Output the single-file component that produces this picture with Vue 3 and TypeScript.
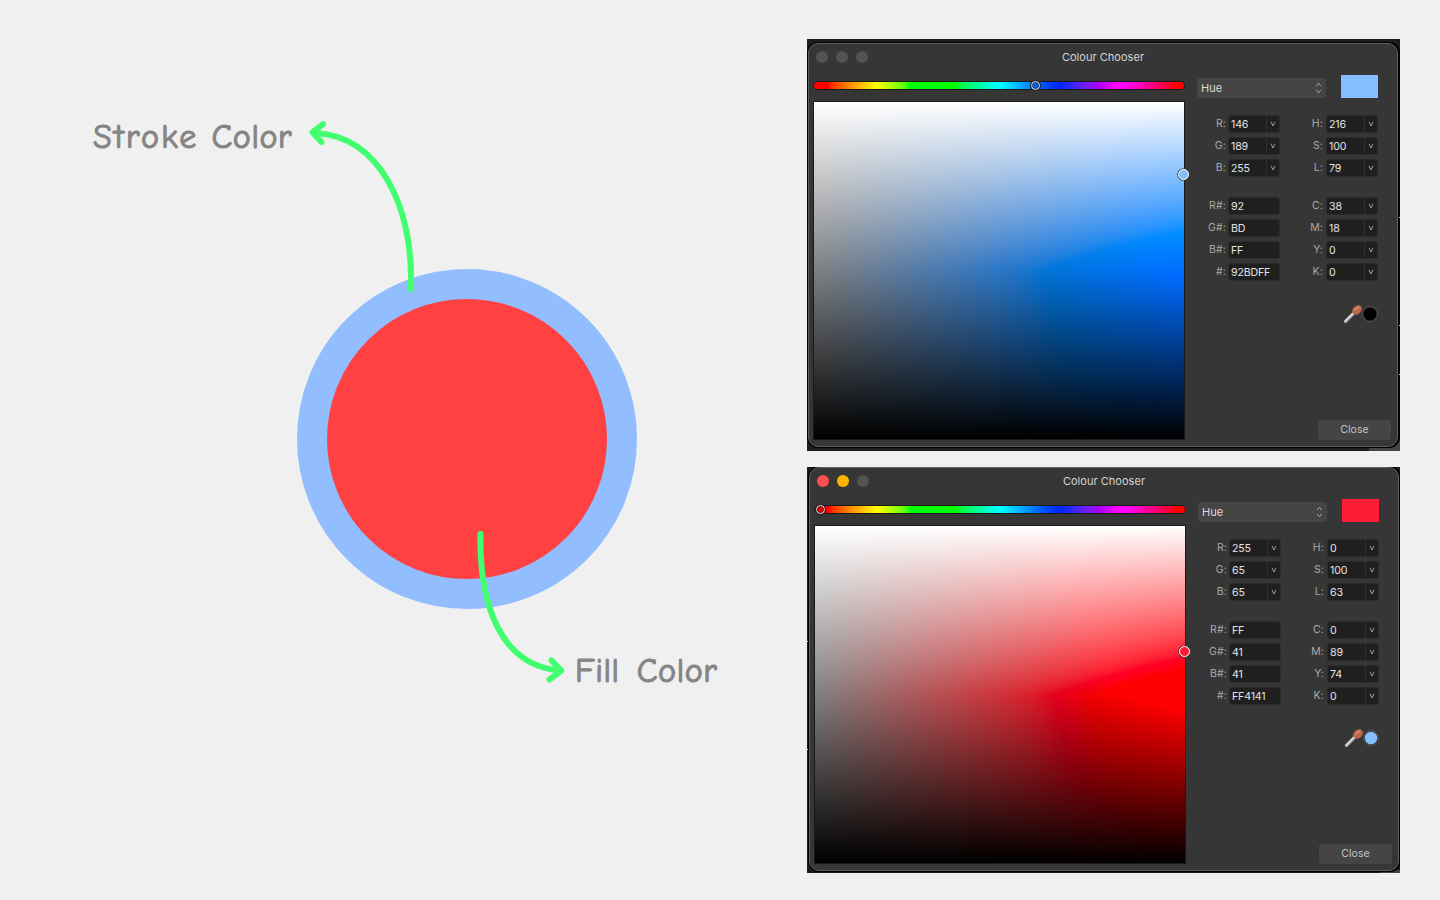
<script setup lang="ts">
import { onMounted, ref } from 'vue'

interface Field { label: string; value: string; stepper: boolean }
interface Chooser {
  id: string
  hue: number
  swatch: string
  picked: string
  lights: string[]
  huePos: number
  hueDot: string
  lumPos: number
  ticks: number[]
  left: Field[][]
  right: Field[][]
}

const group = (stepper: boolean, ...pairs: [string, string][]): Field[] =>
  pairs.map(([label, value]) => ({ label, value, stepper }))

const choosers: Chooser[] = [
  {
    id: 'stroke', hue: 216, swatch: '#85bfff', picked: '#000000',
    lights: ['#535353', '#535353', '#535353'], huePos: 221.5, hueDot: '#0a5fe0', lumPos: 72,
    ticks: [178, 286, 335],
    left: [
      group(true, ['R:', '146'], ['G:', '189'], ['B:', '255']),
      group(false, ['R#:', '92'], ['G#:', 'BD'], ['B#:', 'FF'], ['#:', '92BDFF']),
    ],
    right: [
      group(true, ['H:', '216'], ['S:', '100'], ['L:', '79']),
      group(true, ['C:', '38'], ['M:', '18'], ['Y:', '0'], ['K:', '0']),
    ],
  },
  {
    id: 'fill', hue: 0, swatch: '#ff1c36', picked: '#85bfff',
    lights: ['#ff4f52', '#ffb400', '#535353'], huePos: 5, hueDot: '#d80000', lumPos: 125.5,
    ticks: [174, 282],
    left: [
      group(true, ['R:', '255'], ['G:', '65'], ['B:', '65']),
      group(false, ['R#:', 'FF'], ['G#:', '41'], ['B#:', '41'], ['#:', 'FF4141']),
    ],
    right: [
      group(true, ['H:', '0'], ['S:', '100'], ['L:', '63']),
      group(true, ['C:', '0'], ['M:', '89'], ['Y:', '74'], ['K:', '0']),
    ],
  },
]

const root = ref<HTMLElement | null>(null)

const toLinear = (v: number) => (v <= 0.04045 ? v / 12.92 : ((v + 0.055) / 1.055) ** 2.4)
const toGamma = (v: number) => {
  const c = Math.min(1, Math.max(0, v))
  return 255 * (c <= 0.0031308 ? c * 12.92 : 1.055 * c ** (1 / 2.4) - 0.055)
}

// HSL on Display P3 primaries, converted to sRGB and clipped
function wideHsl(h: number, s: number, l: number): [number, number, number] {
  const a = s * Math.min(l, 1 - l)
  const channel = (n: number) => {
    const k = (n + h / 30) % 12
    return toLinear(l - a * Math.max(-1, Math.min(k - 3, 9 - k, 1)))
  }
  const r = channel(0), g = channel(8), b = channel(4)
  // deep blues keep a little green so they do not turn violet
  const lift = 0.02 * Math.max(0, b - Math.max(r, g))
  return [
    toGamma(1.2249 * r - 0.2249 * g),
    toGamma(-0.042 * r + 1.042 * g + lift),
    toGamma(-0.0196 * r - 0.0786 * g + 1.0982 * b),
  ]
}

function paint(canvas: HTMLCanvasElement, color: (x: number, y: number) => [number, number, number]) {
  const ctx = canvas.getContext('2d')
  if (!ctx) return
  const { width, height } = canvas
  const image = ctx.createImageData(width, height)
  for (let y = 0; y < height; y++) {
    for (let x = 0; x < width; x++) {
      const [r, g, b] = color(x / (width - 1), y / Math.max(1, height - 1))
      image.data.set([r, g, b, 255], (y * width + x) * 4)
    }
  }
  ctx.putImageData(image, 0, 0)
}

onMounted(() => {
  root.value?.querySelectorAll<HTMLCanvasElement>('canvas').forEach((c) => {
    if (c.dataset.kind === 'hue') paint(c, (x) => wideHsl(x * 360, 1, 0.5))
    else paint(c, (x, y) => wideHsl(Number(c.dataset.hue), x, 1 - y))
  })
})
</script>

<template>
  <main ref="root" class="board">
    <section class="drawing">
      <svg class="shapes" width="800" height="900" viewBox="0 0 800 900">
        <circle cx="467" cy="439" r="155" fill="#ff4141" stroke="#92bdff" stroke-width="30" />
        <g fill="none" stroke="#41ff6e" stroke-width="6" stroke-linecap="round" stroke-linejoin="round">
          <path d="M411 289C413 206 380 137 316 133" />
          <path d="M323 124.200L312.500 132.300L321.500 142" />
          <path d="M480.500 534C479 610 504 664 556 670" />
          <path d="M551.500 660.500L561.300 670.700L549.500 679.500" />
        </g>
      </svg>
      <span class="note stroke-note"><span class="wide">Stroke</span> <span>Color</span></span>
      <span class="note fill-note"><span>Fill</span> <span>Color</span></span>
    </section>

    <section class="shots">
      <div v-for="c in choosers" :key="c.id" class="shot" :class="c.id">
        <i class="behind"></i>
        <div class="window">
          <header class="titlebar">
            <div class="lights">
              <i v-for="(l, i) in c.lights" :key="i" :style="{ background: l }"></i>
            </div>
            <span class="title">Colour Chooser</span>
          </header>
          <div class="body">
            <div class="pickers">
              <div class="huebar">
                <canvas data-kind="hue" width="370" height="7"></canvas>
                <i class="ring small" :style="{ left: c.huePos + 'px', background: c.hueDot }"></i>
              </div>
              <div class="area">
                <canvas data-kind="area" :data-hue="c.hue" width="370" height="337"></canvas>
                <i class="ring" :style="{ top: c.lumPos + 'px', background: c.swatch }"></i>
              </div>
            </div>
            <div class="controls">
              <div class="top">
                <div class="select">
                  <span>Hue</span>
                  <svg width="7" height="12" viewBox="0 0 7 12"><path d="M1.200 4L3.500 1.200L5.800 4M1.200 8L3.500 10.800L5.800 8" /></svg>
                </div>
                <div class="swatch" :style="{ background: c.swatch }"></div>
              </div>
              <div class="columns">
                <div v-for="(col, ci) in [c.left, c.right]" :key="ci" class="column">
                  <div v-for="(g, gi) in col" :key="gi" class="group">
                    <div v-for="f in g" :key="f.label" class="row">
                      <span class="label">{{ f.label }}</span>
                      <div class="input">
                        <span class="value">{{ f.value }}</span>
                        <span v-if="f.stepper" class="drop">
                          <svg width="6" height="6" viewBox="0 0 6 6"><path d="M1 .800L3 5L5 .800" /></svg>
                        </span>
                      </div>
                    </div>
                  </div>
                </div>
              </div>
              <div class="picker">
                <svg width="19" height="19" viewBox="0 0 19 19">
                  <path d="M2.500 16.500L10.500 8.500" stroke="#8d8d8d" stroke-width="3.400" stroke-linecap="round" />
                  <path d="M2.300 16.200L10.200 8.300" stroke="#d9d9d9" stroke-width="2" stroke-linecap="round" />
                  <ellipse cx="14" cy="5" rx="5.400" ry="4.100" fill="#b96747" transform="rotate(-42 14 5)" />
                  <path d="M11.800 5.200Q13.300 2.600 15.800 2.400" stroke="#d98b6b" stroke-width="1.600" stroke-linecap="round" fill="none" />
                </svg>
                <i class="picked" :style="{ backgroundColor: c.picked }"></i>
              </div>
              <div class="close">Close</div>
            </div>
          </div>
        </div>
        <i v-for="t in c.ticks" :key="t" class="tick" :style="{ top: t + 'px' }"></i>
      </div>
    </section>
  </main>
</template>

<style scoped>
.board { display: flex; width: 1440px; height: 900px; overflow: hidden; background: #f0f0f0; }
.drawing { position: relative; width: 807px; flex: none; }
.shapes { display: block; }
.note { position: absolute; display: flex; font: 400 34px/40px "Comic Neue", "Chalkboard", Lato, sans-serif; color: #858585; white-space: nowrap; -webkit-text-stroke: 1.100px #858585; letter-spacing: .6px; }
.stroke-note { left: 93px; top: 117px; gap: 13px; }
.stroke-note .wide { letter-spacing: 2.200px; }
.fill-note { left: 575px; top: 651px; gap: 17px; }
.shots { display: flex; flex-direction: column; gap: 16px; padding-top: 39px; }
.shot { position: relative; box-sizing: border-box; width: 593px; overflow: hidden; background: #1d1d1d; }
.shot.stroke { height: 412px; padding: 4px 0 0 1px; }
.shot.fill { height: 406px; padding-left: 2px; }
.tick { position: absolute; width: 1px; height: 1px; background: #ddd; }
.stroke .tick { right: 0; }
.fill .tick { left: 0; }
.behind { position: absolute; right: 0; bottom: 0; width: 31px; height: 16px; background: #444; }
.fill .behind { width: 20px; height: 3px; }
.window {
  position: relative; box-sizing: border-box; width: 590px; height: 404px; border: 1px solid #606060;
  border-radius: 10px; background: #363636; box-shadow: 0 0 0 1px #000, 1px 0 0 1px #000;
  font: 11px/14px Inter, sans-serif; color: #dcdcdc;
}
.titlebar { display: grid; grid-template-columns: 1fr auto 1fr; align-items: center; height: 26px; padding: 0 7px; }
.lights { display: flex; gap: 8px; }
.lights i { width: 12px; height: 12px; border-radius: 50%; }
.title { color: #d4d4d4; letter-spacing: .03px; }
.body { display: flex; padding-left: 4px; }
.pickers { flex: none; width: 372px; padding-top: 11px; }
.huebar { position: relative; box-sizing: border-box; height: 9px; border: 1px solid #181818; border-radius: 5px; }
.huebar canvas { display: block; border-radius: 4px; }
.area { position: relative; box-sizing: border-box; height: 339px; margin-top: 11px; border: 1px solid #181818; }
.area canvas { display: block; }
.ring { position: absolute; left: 369.500px; box-sizing: border-box; width: 11px; height: 11px; margin: -5.500px 0 0 -5.500px; border: 1.500px solid #fff; border-radius: 50%; box-shadow: 0 0 0 .8px #444; }
.ring.small { top: 3.500px; width: 9px; height: 9px; margin: -4.500px 0 0 -4.500px; border: 1px solid #ddd; box-shadow: 0 0 0 1px #222, inset 0 0 0 1px #0006; }
.controls { display: flex; flex: none; flex-direction: column; width: 196px; height: 370px; margin-left: 11px; padding-top: 5px; }
.top { display: flex; align-items: center; gap: 15px; height: 23px; }
.select { display: flex; align-items: center; justify-content: space-between; box-sizing: border-box; width: 129px; height: 20px; margin: 2px 0 0 1px; padding: 0 4px; border-radius: 3px; background: #454545; }
.select svg, .drop svg { fill: none; stroke: #aaa; stroke-width: 1; }
.drop svg { stroke-width: .9; }
.swatch { width: 37px; height: 23px; }
.columns { display: flex; gap: 14px; padding: 17px 0 0 6px; }
.group { display: flex; flex-direction: column; gap: 4px; }
.group + .group { margin-top: 20px; }
.row { display: flex; align-items: center; justify-content: flex-end; gap: 2px; height: 18px; }
.column { width: 78px; }
.column + .column { width: 84px; }
.column + .column .row { gap: 3px; }
.label { font-size: 10.500px; letter-spacing: .15px; color: #a9a9a9; white-space: nowrap; }
.input { display: flex; box-sizing: border-box; width: 52px; height: 18px; border: 1px solid #2b2b2b; border-radius: 3px; background: #1f1f1f; }
.value { flex: 1; padding: 0 0 0 2px; font-size: 10.600px; line-height: 17px; letter-spacing: -.15px; color: #e4e4e4; }
.drop { display: flex; align-items: center; justify-content: center; width: 12px; border-left: 1px solid #303030; }
.picker { display: flex; align-items: center; justify-content: flex-end; height: 20px; margin-top: 23px; padding-right: 14px; }
.picked { box-sizing: border-box; width: 16px; height: 16px; border: 1.500px solid #505050; border-radius: 50%; background-clip: padding-box; box-shadow: inset 0 0 0 .7px #222; }
.close { display: flex; align-items: center; justify-content: center; width: 73px; height: 20px; margin: 96px 0 0 122px; border-radius: 3px; background: #454545; color: #c4c4c4; font-size: 10.500px; letter-spacing: .1px; }
</style>

<style>
body { background: #f0f0f0; }
</style>
